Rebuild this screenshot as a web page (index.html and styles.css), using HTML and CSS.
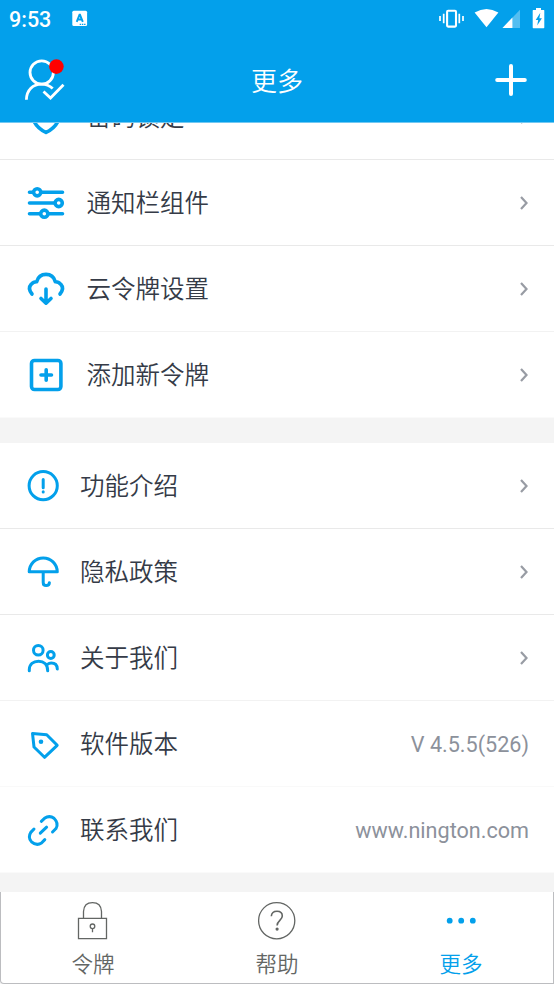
FILE: index.html
```html
<!DOCTYPE html>
<html lang="zh-CN">
<head>
<meta charset="utf-8">
<title>更多</title>
<link rel="stylesheet" href="styles.css">
</head>
<body>
<div class="app">
  <header class="top">
    <div class="status">
      <span class="clock">9:53</span>
      <svg class="input-icon" viewBox="72 10 16 17"><rect x="72.3" y="10.8" width="14.8" height="15.2" rx="1.5" fill="#fff"/><path d="M76.7 21.8l2.8-7h.5l2.8 7M77.8 19.5h4" fill="none" stroke="#03a0eb" stroke-width="1.9"/><path d="M79.7 24.3h6" stroke="#03a0eb" stroke-width="1.2" stroke-dasharray="1.4 .8"/></svg>
      <svg class="system-icons" viewBox="438 6 108 24">
        <path d="M440 16v5M443.7 13.8v9.400M463 16v5M459.300 13.800v9.400" stroke="#fff" stroke-width="1.700"/>
        <rect x="447.100" y="10.800" width="8.900" height="15.800" rx="1" fill="none" stroke="#fff" stroke-width="2.100"/>
        <path d="M474.600 12.600Q486.500 5.400 498.400 12.600L486.500 27.300Z" fill="#fff"/>
        <path d="M520 9.700V28H502.500Z" fill="#fff" opacity=".32"/><path d="M512.400 17.600V28H502.500Z" fill="#fff"/>
        <path d="M533.300 10h2.700V8h5v2h2.800q.5 0 .5.500v17q0 .7-.7.700h-10.200q-.7 0-.7-.7v-17q0-.5.600-.5z" fill="#fff"/>
        <path d="M540.300 12.800l-4.600 7.200h2.500l-1 5.500 4.700-7.200h-2.500z" fill="#03a0eb"/>
      </svg>
    </div>
    <div class="titlebar">
      <svg class="account" viewBox="22 56 46 46" fill="none" stroke="#fff" stroke-width="2.800">
        <circle cx="41.700" cy="72.500" r="11.700"/>
        <path d="M26.400 99.800C26.600 90 33 84.200 41.500 84.200Q48 84.200 52.700 88.600M43.500 91.500l7 6.500L63.500 84.700"/>
        <circle cx="56.400" cy="66.600" r="7.300" fill="#f00" stroke="none"/>
      </svg>
      <h1>更多</h1>
      <svg class="add" viewBox="494 62 34 36"><path d="M497.200 80H524.800M511 66V94" stroke="#fff" stroke-width="4" stroke-linecap="round"/></svg>
    </div>
  </header>

  <main class="content">
    <section class="group tools">
      <div class="row">
        <svg class="icon" viewBox="24 94 44 45"><path d="M33 103L46 98 59 103V118Q57 127 46 132.500 35 127 33 118Z"/></svg>
        <span class="label">密码锁定</span>
        <svg class="chevron" viewBox="0 0 10 16"><path d="M2 2l5.500 6L2 14"/></svg>
      </div>
      <div class="row">
        <svg class="icon" viewBox="24 180 44 45"><path d="M29.500 192.300H33M41.500 192.300H62.500M29.500 203H54.500M29.500 213.700H40M48.500 213.700H62.500"/><circle cx="37.200" cy="192.300" r="3.600"/><circle cx="58.700" cy="203" r="3.600"/><circle cx="44.300" cy="213.700" r="3.600"/></svg>
        <span class="label">通知栏组件</span>
        <svg class="chevron" viewBox="0 0 10 16"><path d="M2 2l5.500 6L2 14"/></svg>
      </div>
      <div class="row">
        <svg class="icon" viewBox="24 266 44 45"><path d="M32 294Q27.400 288.500 31.200 284.300 33.500 281.600 36.700 281.700C38 277 41.500 274.400 46 274.400S54 277 55.300 281.700Q58.500 281.600 60.800 284.300 64.600 288.500 60 294M46 289V302M41 298.500L46 303.200 51 298.500"/></svg>
        <span class="label">云令牌设置</span>
        <svg class="chevron" viewBox="0 0 10 16"><path d="M2 2l5.500 6L2 14"/></svg>
      </div>
      <div class="row">
        <svg class="icon" viewBox="24 352 44 45"><rect x="31.500" y="360.500" width="29.400" height="29" rx="3"/><path d="M41 375H51.500M46.200 369.800V380.200"/></svg>
        <span class="label">添加新令牌</span>
        <svg class="chevron" viewBox="0 0 10 16"><path d="M2 2l5.500 6L2 14"/></svg>
      </div>
    </section>
    <section class="group about">
      <div class="row">
        <svg class="icon" viewBox="24 463 44 45"><circle cx="43.200" cy="485.700" r="14.100"/><path d="M43.200 479.500V487.800M43.200 491.700v.2" stroke-width="3"/></svg>
        <span class="label">功能介绍</span>
        <svg class="chevron" viewBox="0 0 10 16"><path d="M2 2l5.500 6L2 14"/></svg>
      </div>
      <div class="row">
        <svg class="icon" viewBox="24 549 44 45"><path d="M29.200 571.800C29.500 564 35.500 557.900 43.200 557.900S57 564 57.300 571.800ZM43.200 572V582.500Q43.200 585.600 46.200 585.600 49.200 585.600 49.400 582.700"/></svg>
        <span class="label">隐私政策</span>
        <svg class="chevron" viewBox="0 0 10 16"><path d="M2 2l5.500 6L2 14"/></svg>
      </div>
      <div class="row">
        <svg class="icon" viewBox="24 635 44 45"><circle cx="38.300" cy="650.200" r="4.800"/><circle cx="50.800" cy="655" r="3.400"/><path d="M29.300 670.700V669.500C29.500 664.200 33.200 661.200 38.500 661.200S47.700 664.200 47.700 670.700M47.500 664.300Q49 663.100 51.200 663.100C55 663.100 57.200 665.500 57.300 669"/></svg>
        <span class="label">关于我们</span>
        <svg class="chevron" viewBox="0 0 10 16"><path d="M2 2l5.500 6L2 14"/></svg>
      </div>
      <div class="row">
        <svg class="icon" viewBox="24 721 44 45"><path d="M32.500 733.400L46.700 734.700 57.200 745.300 44.500 757.300 34 747Z"/><circle cx="41" cy="741.800" r="2.300" fill="#03a0eb" stroke="none"/></svg>
        <span class="label">软件版本</span>
        <span class="value">V 4.5.5(526)</span>
      </div>
      <div class="row">
        <svg class="icon" viewBox="24 807 44 45"><path d="M41.300 821.300L44.500 818.300Q49.500 814.900 54 818.300 59 823.200 56 828.500L52.500 832M34 829L30.800 832.400Q27.500 837.500 31.500 841.800 36.500 846.200 41.500 843L44.800 839.600M40.300 833.200L46.600 827.200"/></svg>
        <span class="label">联系我们</span>
        <span class="value">www.nington.com</span>
      </div>
    </section>
  </main>

  <nav class="tabs">
    <div class="tab">
      <svg class="tab-icon" viewBox="72 900 42 42"><path d="M83.500 918V911.500Q84 902.700 92.500 902.700T101.500 911.500V918M78.500 918.300H106.500V938.700H78.500ZM92.500 928.500V932.200" stroke-width="1.300"/><circle cx="92.500" cy="926.300" r="2.300" stroke-width="1.300"/></svg>
      <span>令牌</span>
    </div>
    <div class="tab">
      <svg class="tab-icon" viewBox="256 900 42 42"><circle cx="276.700" cy="920.700" r="18.100" stroke-width="1.300"/><path d="M271.300 916.200C271.600 913 273.500 911.300 277 911.300S282.300 913.200 282.300 916C282.300 920.200 277.100 920.700 277.100 925.500" stroke-width="1.600"/><circle cx="277.100" cy="929.100" r="1.600" fill="#636664" stroke="none"/></svg>
      <span>帮助</span>
    </div>
    <div class="tab active">
      <svg class="tab-icon" viewBox="440 900 42 42"><g fill="#03a0eb" stroke="none"><circle cx="449.700" cy="920.700" r="2.900"/><circle cx="461.200" cy="920.700" r="2.900"/><circle cx="472.800" cy="920.700" r="2.900"/></g></svg>
      <span>更多</span>
    </div>
  </nav>
</div>
</body>
</html>
```
FILE: styles.css
```css
* { box-sizing: border-box; }
body {
  margin: 0;
  font-family: Roboto, "Noto Sans CJK SC", sans-serif;
}
svg { display: block; flex: none; }
.app {
  width: 554px;
  height: 984px;
  display: flex;
  flex-direction: column;
  overflow: hidden;
  background: #f4f4f4;
}
.top {
  height: 123px;
  flex: none;
  background: #03a0eb;
  border-bottom: 1px solid #72c8f2;
  color: #fff;
}
.status {
  height: 38px;
  display: flex;
  align-items: center;
  padding: 0 8px 0 9px;
}
.clock {
  width: 63px;
  font-size: 21.5px;
  font-weight: 500;
  line-height: 38px;
  padding-top: 2px;
}
.input-icon { width: 16px; height: 17px; margin-top: -1px; }
.system-icons { width: 108px; height: 24px; margin-left: auto; margin-top: -2px; }
.titlebar {
  height: 84px;
  display: grid;
  grid-template-columns: 46px 1fr 46px;
  align-items: center;
  padding: 0 22px;
}
.account { width: 46px; height: 46px; margin-top: -2px; }
.add { width: 34px; height: 36px; margin-left: 8px; }
h1 {
  margin: 0;
  padding-top: 3px;
  font-size: 26px;
  font-weight: 350;
  line-height: 40px;
  text-align: center;
}
.content {
  height: 769px;
  flex: none;
  overflow: hidden;
}
.group { background: #fff; }
.tools { margin-top: -49px; }
.about { margin-top: 25px; }
.row {
  height: 86px;
  display: flex;
  align-items: center;
  padding: 0 25px 0 24px;
  border-bottom: 1px solid #e9e9e9;
}
.tools .row:nth-child(3),
.about .row:nth-child(3) { border-bottom-color: #f2f2f2; }
.about .row:nth-child(4) { border-bottom-color: #f9f9f9; }
.row:last-child { border-bottom-color: #fafafa; }
.icon {
  width: 44px;
  height: 45px;
  fill: none;
  stroke: #03a0eb;
  stroke-width: 3.6;
  stroke-linecap: round;
  stroke-linejoin: round;
}
.about .icon { stroke-width: 3; }
.label {
  margin-left: 18.5px;
  padding-top: 2px;
  font-size: 24.5px;
  font-weight: 350;
  line-height: 36px;
  color: #353b47;
}
.about .label { margin-left: 12px; }
.chevron {
  width: 10px;
  height: 16px;
  margin-left: auto;
  fill: none;
  stroke: #989ca4;
  stroke-width: 2.2;
}
.value {
  margin-left: auto;
  padding-top: 2px;
  font-size: 21.6px;
  line-height: 32px;
  color: #8c919b;
}
.tabs {
  height: 92px;
  display: grid;
  grid-template-columns: repeat(3, 1fr);
  background: #fff;
  border: 1px solid #bcbdc0;
  border-top: 0;
  border-radius: 0 0 0 4px;
}
.tab {
  display: flex;
  flex-direction: column;
  align-items: center;
  padding-top: 8px;
  font-size: 21.5px;
  font-weight: 350;
  line-height: 32px;
  color: #636664;
}
.tab span { margin-top: 7px; }
.tab-icon { width: 42px; height: 42px; fill: none; stroke: #636664; }
.tab.active { color: #03a0eb; }
```
